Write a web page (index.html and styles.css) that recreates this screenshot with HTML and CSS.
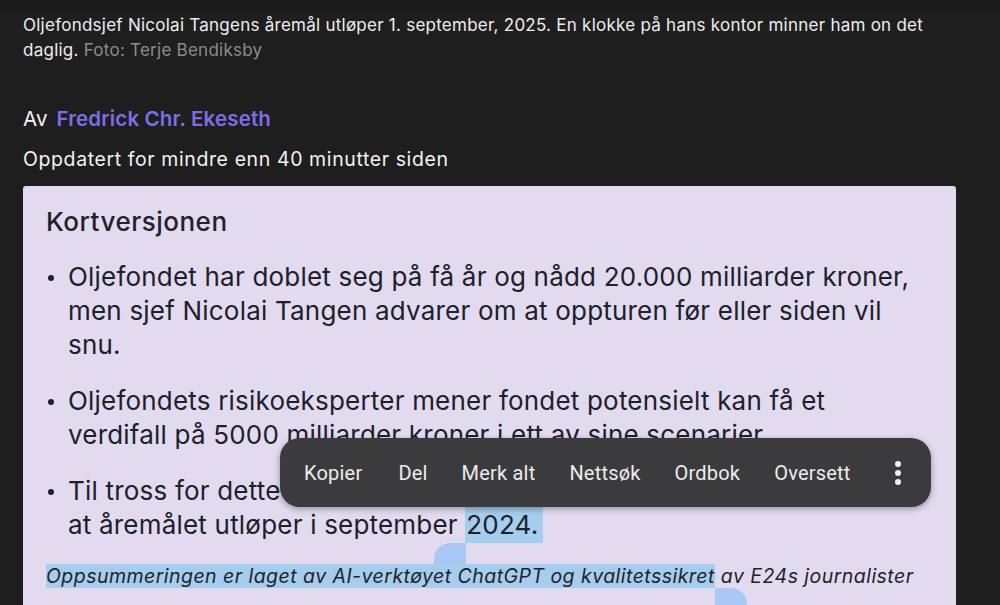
FILE: index.html
```html
<!DOCTYPE html>
<html lang="no">
<head>
<meta charset="utf-8">
<link rel="stylesheet" href="styles.css">
</head>
<body>
<div class="topband"></div>
<main class="article">
  <p class="caption">Oljefondsjef Nicolai Tangens åremål utløper 1. september, 2025. En klokke på hans kontor minner ham on det<br>daglig. <span class="credit">Foto: Terje Bendiksby</span></p>
  <p class="byline">Av <a class="author">Fredrick Chr. Ekeseth</a></p>
  <p class="updated">Oppdatert for mindre enn 40 minutter siden</p>
  <section class="summary">
    <h2 class="summary-title">Kortversjonen</h2>
    <ul class="points">
      <li>Oljefondet har doblet seg på få år og nådd 20.000 milliarder kroner,<br>men sjef Nicolai Tangen advarer om at oppturen før eller siden vil<br>snu.</li>
      <li>Oljefondets risikoeksperter mener fondet potensielt kan få et<br>verdifall på 5000 milliarder kroner i ett av sine scenarier.</li>
      <li>Til tross for dette er Tangen ikke bekymret for at han må gå av,<br>at åremålet utløper i september <span class="sel sel-start">2024.</span></li>
    </ul>
    <p class="note"><span class="sel sel-last">Oppsummeringen er laget av AI-verktøyet ChatGPT og kvalitetssikret</span> av E24s journalister</p>
  </section>
</main>
<div class="menu">
  <span class="menu-item menu-first">Kopier</span>
  <span class="menu-item">Del</span>
  <span class="menu-item">Merk alt</span>
  <span class="menu-item">Nettsøk</span>
  <span class="menu-item">Ordbok</span>
  <span class="menu-item">Oversett</span>
  <span class="menu-more"><i></i><i></i><i></i></span>
</div>
</body>
</html>
```
FILE: styles.css
```css
html, body {
  margin: 0;
  padding: 0;
  background: #1e1e1e;
  height: 605px;
  overflow: hidden;
}
body {
  font-family: Inter, "Noto Sans", sans-serif;
  color: #ececec;
  position: relative;
}
.topband {
  height: 12px;
  background: #1a1a1a;
}
.article {
  padding: 0 44px 0 23px;
}
.caption {
  margin: 1px 0 0;
  font-size: 17px;
  line-height: 25px;
  letter-spacing: 0.25px;
  color: #ededed;
  white-space: nowrap;
}
.credit {
  color: #8c8c8c;
}
.byline {
  margin: 41px 0 0;
  font-size: 20.5px;
  line-height: 30px;
  letter-spacing: 0.15px;
  color: #f2f2f2;
}
.author {
  margin-left: 3px;
  color: #7d6ee6;
  font-weight: 600;
}
.updated {
  margin: 11px 0 0;
  font-size: 19.5px;
  line-height: 28px;
  letter-spacing: 0.6px;
  color: #f2f2f2;
}
.summary {
  margin-top: 13px;
  background: #e2dbf0;
  border-radius: 3px;
  padding: 20px 23px 40px;
  color: #20202a;
}
.summary-title {
  margin: 0;
  font-size: 26px;
  line-height: 32px;
  letter-spacing: 0.5px;
  font-weight: 500;
  color: #222228;
}
.points {
  list-style: none;
  margin: 22px 0 0;
  padding: 0 0 0 22px;
}
.points li {
  position: relative;
  font-size: 26px;
  line-height: 34px;
  letter-spacing: 0.2px;
  margin-bottom: 22px;
  white-space: nowrap;
}
.points li::before {
  content: "";
  position: absolute;
  left: -20px;
  top: 15px;
  width: 6px;
  height: 6px;
  border-radius: 50%;
  background: #20202a;
}
.sel {
  position: relative;
  background: #a6cdee;
}
.sel-start {
  padding: 3px 5px 3px 1px;
}
.sel-start::before,
.sel-last::after {
  content: "";
  position: absolute;
  top: 100%;
  width: 32px;
  height: 32px;
  background: #a9c8f6;
}
.sel-start::before {
  left: -31px;
  border-radius: 50% 0 50% 50%;
}
.sel-last::after {
  right: -32px;
  border-radius: 0 50% 50% 50%;
}
.note {
  margin: 0;
  font-size: 19.5px;
  line-height: 24px;
  letter-spacing: 0.46px;
  font-style: italic;
  color: #22222c;
  white-space: nowrap;
}
.menu {
  position: absolute;
  left: 280px;
  top: 438px;
  width: 651px;
  height: 69px;
  box-sizing: border-box;
  border-radius: 20px;
  background: #3b3a3d;
  box-shadow: 0 2px 6px rgba(0, 0, 0, 0.35);
  display: flex;
  align-items: center;
  padding: 0 0 0 24px;
  font-family: Roboto, "Noto Sans", sans-serif;
  font-size: 20px;
  letter-spacing: 0.2px;
  color: #ececec;
}
.menu-item {
  margin-right: 34px;
}
.menu-first {
  margin-right: 36px;
}
.menu-more {
  margin-left: auto;
  margin-right: 30px;
  display: flex;
  flex-direction: column;
  gap: 3px;
}
.menu-more i {
  display: block;
  width: 6px;
  height: 6px;
  border-radius: 50%;
  background: #f0f0f0;
}
```
